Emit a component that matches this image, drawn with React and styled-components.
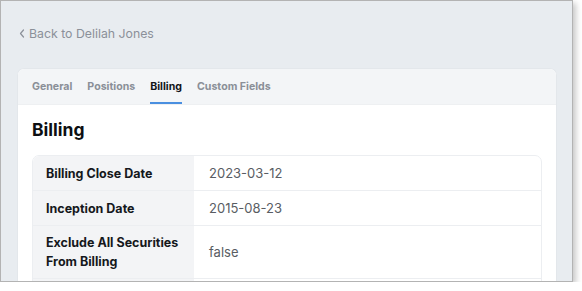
import React from "react";
import styled, { createGlobalStyle } from "styled-components";

const Global = createGlobalStyle`
  html, body { margin: 0; padding: 0; background: #ffffff; }
  body { font-family: Inter, "Noto Sans", sans-serif; -webkit-font-smoothing: antialiased; }
`;

const Frame = styled.div`
  box-sizing: border-box;
  width: 573px;
  height: 282px;
  border: 1px solid #b3b3b3;
  background: #e8ecf0;
  box-shadow: 3px 3px 6px rgba(0, 0, 0, 0.22);
  overflow: hidden;
  display: flex;
  flex-direction: column;
  padding: 23px 16px 0 16px;
`;

const BackLink = styled.a`
  display: flex;
  align-items: center;
  gap: 4px;
  height: 18px;
  padding-left: 2px;
  color: #8b9099;
  font-size: 12.3px;
  text-decoration: none;
  margin-bottom: 26px;
`;

const Card = styled.div`
  width: 538px;
  background: #ffffff;
  border: 1px solid #e3e7eb;
  border-bottom: none;
  border-radius: 7px 7px 0 0;
  flex: 1;
  overflow: hidden;
`;

const TabBar = styled.div`
  display: flex;
  gap: 15px;
  height: 35px;
  padding-left: 14px;
  background: #f3f5f7;
  border-bottom: 1px solid #eef0f2;
`;

const Tab = styled.div`
  display: flex;
  align-items: center;
  font-size: 10.6px;
  font-weight: 700;
  color: ${(p) => (p.$active ? "#111418" : "#8a8f97")};
  box-shadow: ${(p) => (p.$active ? "inset 0 -2px 0 #4a8fe0" : "none")};
`;

const Body = styled.div`
  padding: 13px 14px 0 14px;
`;

const Heading = styled.h2`
  margin: 0 0 13px 0;
  font-size: 17.5px;
  font-weight: 700;
  color: #0d0f12;
  line-height: 24px;
`;

const Table = styled.div`
  border: 1px solid #eceef1;
  border-radius: 7px;
  overflow: hidden;
`;

const Row = styled.div`
  display: grid;
  grid-template-columns: 161px 1fr;
  min-height: 34px;
  border-top: ${(p) => (p.$first ? "none" : "1px solid #eceef1")};
`;

const Label = styled.div`
  background: #f3f4f6;
  padding: 7px 10px 7px 13px;
  display: flex;
  align-items: center;
  font-size: 12.5px;
  font-weight: 700;
  line-height: 19px;
  color: #15181c;
`;

const Value = styled.div`
  padding: 0 15px;
  display: flex;
  align-items: center;
  font-size: 13px;
  color: #595d63;
`;

const rows = [
  ["Billing Close Date", "2023-03-12"],
  ["Inception Date", "2015-08-23"],
  ["Exclude All Securities From Billing", "false"],
  ["", ""],
];

export default function App() {
  return (
    <>
      <Global />
      <Frame>
        <BackLink>
          <svg width="6" height="9" viewBox="0 0 6 9" fill="none">
            <path d="M4.5 1L1.5 4.5L4.5 8" stroke="#8b9099" strokeWidth="1.2" strokeLinecap="round" strokeLinejoin="round" />
          </svg>
          Back to Delilah Jones
        </BackLink>
        <Card>
          <TabBar>
            <Tab>General</Tab>
            <Tab>Positions</Tab>
            <Tab $active>Billing</Tab>
            <Tab>Custom Fields</Tab>
          </TabBar>
          <Body>
            <Heading>Billing</Heading>
            <Table>
              {rows.map(([l, v], i) => (
                <Row key={i} $first={i === 0}>
                  <Label>{l}</Label>
                  <Value>{v}</Value>
                </Row>
              ))}
            </Table>
          </Body>
        </Card>
      </Frame>
    </>
  );
}
